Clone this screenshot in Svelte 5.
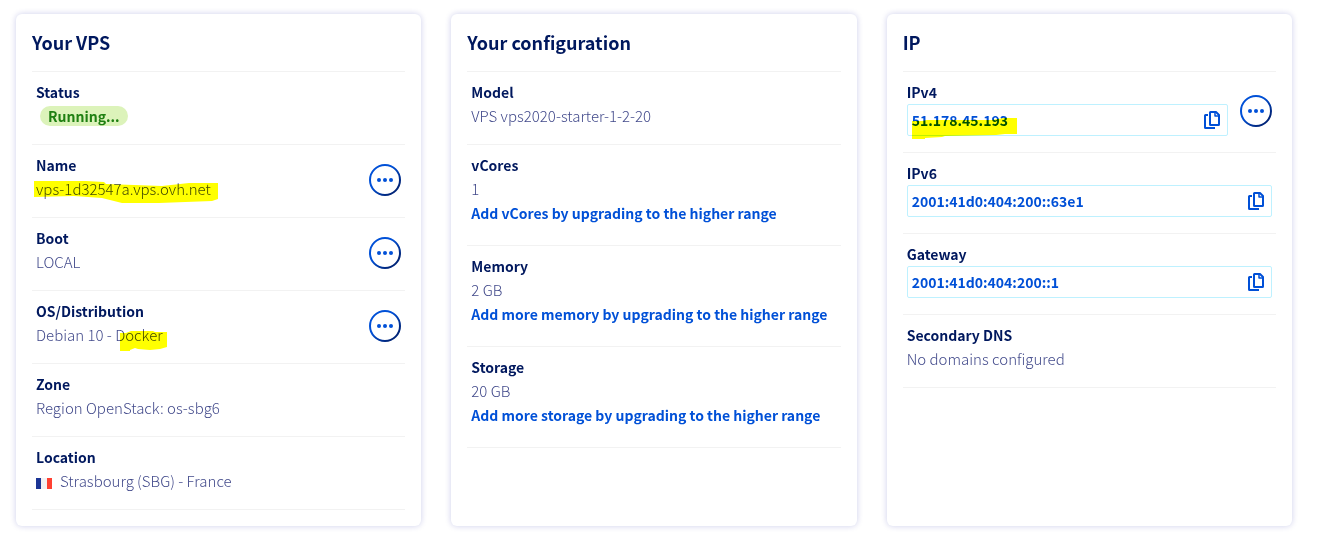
<script>
  const overview = [
    { label: 'Status', badge: 'Running...' },
    {
      label: 'Name', value: 'vps-1d32547a.vps.ovh.net', menu: true,
      mark: { x: -2, y: 4, w: 184, h: 23, d: 'M0 0L52 0L70 1L72 3L128 5L155 2L184 2V18L178 20L125 22L88 22L68 17L40 15L0 16Z' }
    },
    { label: 'Boot', value: 'LOCAL', menu: true },
    {
      label: 'OS/Distribution', value: 'Debian 10 - Docker', menu: true,
      mark: { x: 84, y: 8, w: 48, h: 21, d: 'M0 2L6 2L11 0H33L35 1H47V16L40 18L30 19L18 18L15 17L10 19V20L0 20Z' }
    },
    { label: 'Zone', value: 'Region OpenStack: os-sbg6' },
    { label: 'Location', value: 'Strasbourg (SBG) - France', flag: true }
  ];
  const configuration = [
    { label: 'Model', value: 'VPS vps2020-starter-1-2-20' },
    { label: 'vCores', value: '1', link: 'Add vCores by upgrading to the higher range' },
    { label: 'Memory', value: '2 GB', link: 'Add more memory by upgrading to the higher range' },
    { label: 'Storage', value: '20 GB', link: 'Add more storage by upgrading to the higher range' }
  ];
  const network = [
    {
      label: 'IPv4', address: '51.178.45.193', menu: true,
      mark: { x: 5, y: 14, w: 106, h: 22, d: 'M0 3L10 3L15 2L80 2L92 0L105 0V16L93 16L84 17L33 18L30 19L13 20V21L0 21Z' }
    },
    { label: 'IPv6', address: '2001:41d0:404:200::63e1' },
    { label: 'Gateway', address: '2001:41d0:404:200::1' },
    { label: 'Secondary DNS', value: 'No domains configured' }
  ];
  const cards = [
    { title: 'Your VPS', rows: overview },
    { title: 'Your configuration', rows: configuration },
    { title: 'IP', rows: network }
  ];
</script>

<main>
  {#each cards as card}
    <section>
      <h2>{card.title}</h2>
      <dl>
        {#each card.rows as row}
          <div class="row">
            <div class="text" class:with-link={row.link}>
              <dt>{row.label}</dt>
              <dd>
                {#if row.badge}
                  <span class="badge">{row.badge}</span>
                {:else if row.address}
                  <div class="address">
                    <span>{row.address}</span>
                    <button class="copy" aria-label="Copy">
                      <svg width="16" height="18" viewBox="0 0 16 18" fill="none" stroke="currentColor" stroke-width="2" stroke-linejoin="round">
                        <path d="M6.500 1H12L15 4V13.500Q15 14 14.500 14H6.500Q6 14 6 13.500V1.500Q6 1 6.500 1Z" />
                        <path d="M11 1.500V5H14.500" stroke-width="1.500" />
                        <path d="M4 4H1.500Q1 4 1 4.500V16.500Q1 17 1.500 17H11" />
                      </svg>
                    </button>
                  </div>
                {:else}
                  {#if row.flag}
                    <svg class="flag" width="16" height="11" viewBox="0 0 16 11">
                      <path d="M0 0H5V11H0Z" fill="#1b3595" />
                      <path d="M5 0H11V11H5Z" fill="#f2f2f4" />
                      <path d="M11 0H16V11H11Z" fill="#ff4132" />
                    </svg>
                  {/if}
                  <span class="value">{row.value}</span>
                {/if}
                {#if row.mark}
                  <svg class="mark" style="left:{row.mark.x}px;top:{row.mark.y}px" width={row.mark.w} height={row.mark.h}>
                    <path d={row.mark.d} fill="#ff0" />
                  </svg>
                {/if}
              </dd>
              {#if row.link}
                <dd><a href="#upgrade">{row.link}</a></dd>
              {/if}
            </div>
            {#if row.menu}
              <button class="menu" aria-label="{row.label} actions">
                <svg width="32" height="32" viewBox="0 0 32 32">
                  <defs>
                    <linearGradient id="ring" x1="0" y1="0" x2="1" y2="1">
                      <stop offset="0.400" stop-color="#0050d7" />
                      <stop offset="0.800" stop-color="#00257a" />
                    </linearGradient>
                  </defs>
                  <circle cx="16" cy="16" r="15" fill="#fff" stroke="url(#ring)" stroke-width="2" />
                  <g fill="#0050d7">
                    <circle cx="10" cy="16" r="2" />
                    <circle cx="16" cy="16" r="2" />
                    <circle cx="22" cy="16" r="2" />
                  </g>
                </svg>
              </button>
            {/if}
          </div>
        {/each}
      </dl>
    </section>
  {/each}
</main>

<style>
  :global(body) {
    background: #fff;
  }
  main {
    display: grid;
    grid-template-columns: repeat(3, minmax(0, 1fr));
    gap: 30px;
    padding: 14px 28px 11px 16px;
    font: 14px/24px 'Noto Sans CJK SC', 'Noto Sans', sans-serif;
    color: #424a8b;
  }
  section {
    box-sizing: border-box;
    padding: 16px;
    border-radius: 6px;
    background: #fff;
    box-shadow: 0 0 6px rgba(0, 14, 156, 0.2);
  }
  h2 {
    margin: 0 0 17px;
    font-size: 18px;
    line-height: 24px;
    font-weight: 700;
    color: #00185e;
  }
  dl {
    margin: 0;
    border-bottom: 1px solid #f2f2f2;
  }
  .row {
    display: flex;
    align-items: center;
    gap: 12px;
    padding: 0 4px;
    border-top: 1px solid #f2f2f2;
  }
  .text {
    flex: 1;
    min-width: 0;
    padding: 8px 0 16px;
  }
  .with-link {
    padding-bottom: 20px;
  }
  dt {
    font-weight: 700;
    color: #00185e;
  }
  dd {
    position: relative;
    display: flex;
    align-items: center;
    margin: 0;
  }
  .value {
    font-size: 15px;
    font-weight: 300;
  }
  a {
    font-weight: 700;
    color: #0050d7;
    text-decoration: none;
  }
  .badge {
    margin: 2px 4px;
    padding: 0 8px;
    border-radius: 10px;
    line-height: 20px;
    font-weight: 700;
    color: #1f8012;
    background: #dcf3ba;
  }
  .address {
    box-sizing: border-box;
    display: flex;
    flex: 1;
    align-items: center;
    justify-content: space-between;
    height: 32px;
    padding: 0 7px 0 4px;
    border: 1px solid #bef1ff;
    border-radius: 2px;
    font-weight: 700;
    color: #0050d7;
  }
  button {
    display: flex;
    padding: 0;
    border: 0;
    background: none;
    color: #0050d7;
    cursor: pointer;
  }
  .menu {
    margin-bottom: 2px;
  }
  .flag {
    margin: 4px 8px 0 0;
  }
  .mark {
    position: absolute;
    mix-blend-mode: multiply;
    pointer-events: none;
  }
</style>
